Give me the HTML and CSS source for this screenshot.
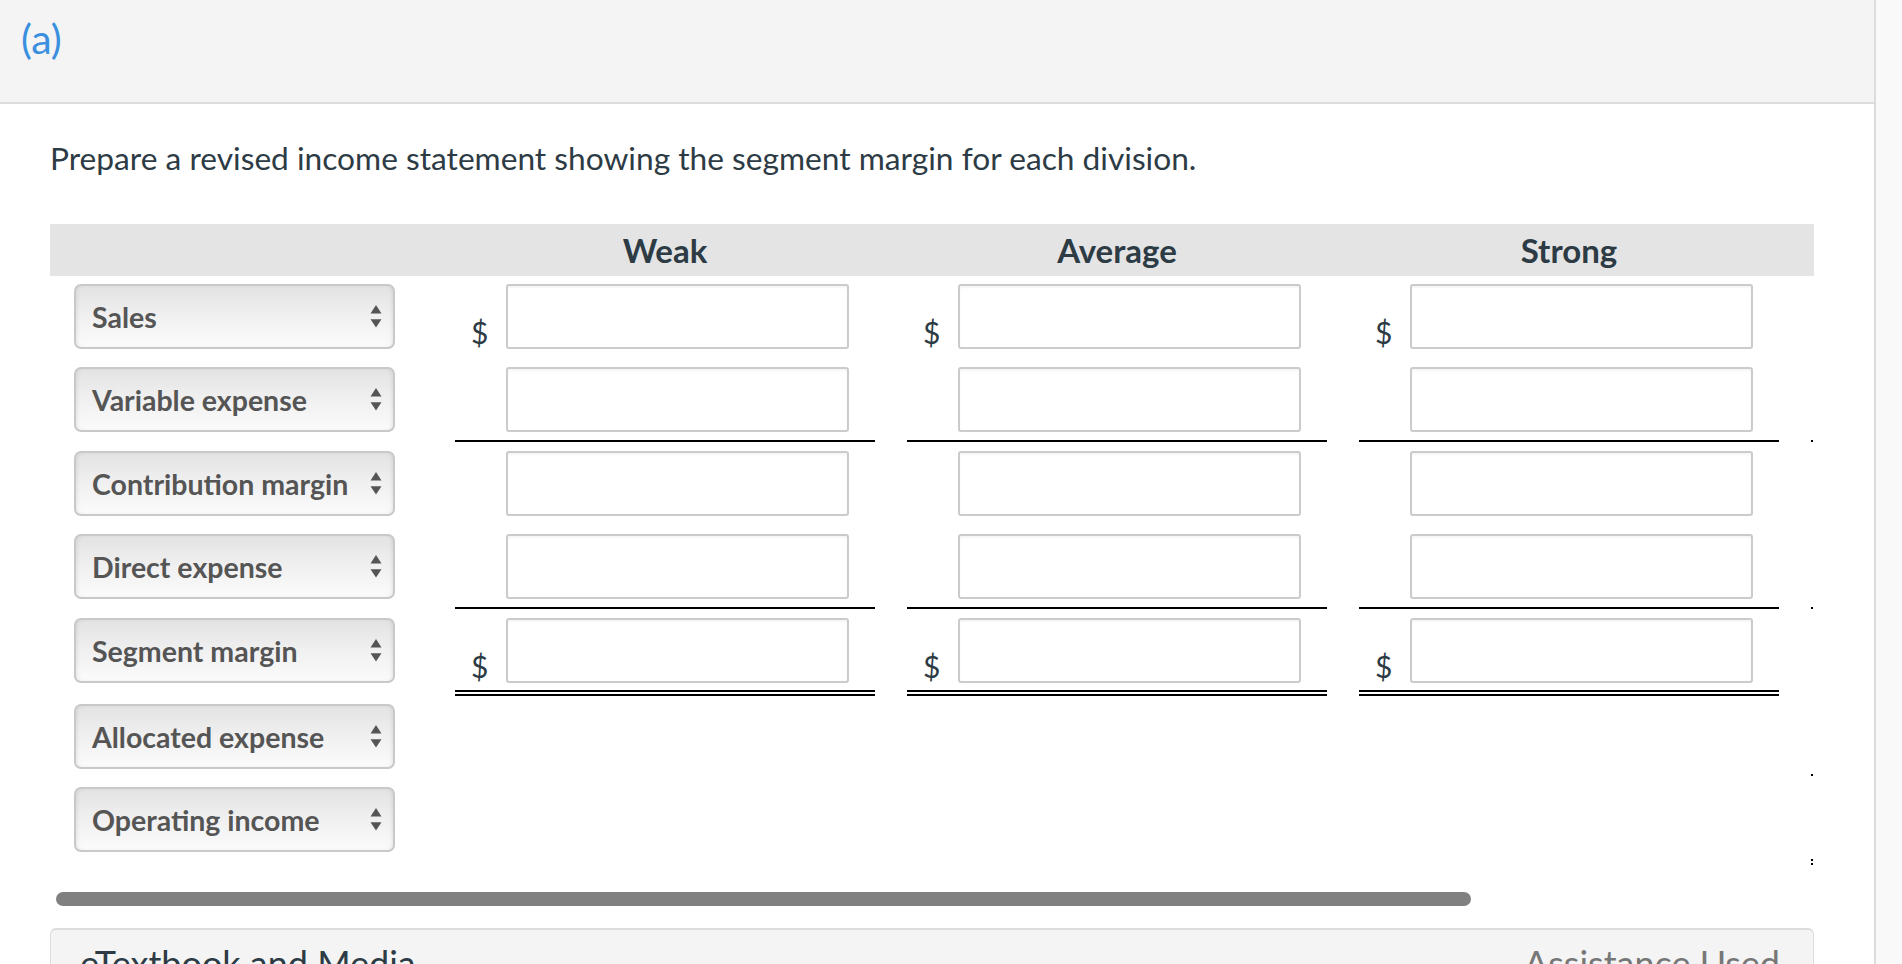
FILE: index.html
```html
<!DOCTYPE html>
<html lang="en">
<head>
<meta charset="utf-8">
<title>Segment margin</title>
<link rel="stylesheet" href="styles.css">
</head>
<body>
<div class="page">
  <div class="main">
    <header class="part-head"><span class="part-label">(a)</span></header>
    <section class="content">
      <p class="question">Prepare a revised income statement showing the segment margin for each division.</p>
      <div class="sheet">
        <div class="thead">
          <div></div>
          <div class="th">Weak</div>
          <div class="th">Average</div>
          <div class="th">Strong</div>
        </div>

        <div class="row">
          <div class="select">Sales<svg class="arrows" viewBox="0 0 12 23"><polygon points="6,0 11.5,8.6 0.5,8.6"/><polygon points="0.5,14.3 11.5,14.3 6,22.6"/></svg></div>
          <div class="amt"><span class="dollar">$</span><span class="field"></span></div>
          <div class="amt"><span class="dollar">$</span><span class="field"></span></div>
          <div class="amt"><span class="dollar">$</span><span class="field"></span></div>
          <div class="mark"></div>
        </div>

        <div class="row row-sub">
          <div class="select">Variable expense<svg class="arrows" viewBox="0 0 12 23"><polygon points="6,0 11.5,8.6 0.5,8.6"/><polygon points="0.5,14.3 11.5,14.3 6,22.6"/></svg></div>
          <div class="amt"><span class="dollar"></span><span class="field"></span></div>
          <div class="amt"><span class="dollar"></span><span class="field"></span></div>
          <div class="amt"><span class="dollar"></span><span class="field"></span></div>
          <div class="mark"><i class="dot"></i></div>
        </div>

        <div class="row">
          <div class="select">Contribution margin<svg class="arrows" viewBox="0 0 12 23"><polygon points="6,0 11.5,8.6 0.5,8.6"/><polygon points="0.5,14.3 11.5,14.3 6,22.6"/></svg></div>
          <div class="amt"><span class="dollar"></span><span class="field"></span></div>
          <div class="amt"><span class="dollar"></span><span class="field"></span></div>
          <div class="amt"><span class="dollar"></span><span class="field"></span></div>
          <div class="mark"></div>
        </div>

        <div class="row row-sub">
          <div class="select">Direct expense<svg class="arrows" viewBox="0 0 12 23"><polygon points="6,0 11.5,8.6 0.5,8.6"/><polygon points="0.5,14.3 11.5,14.3 6,22.6"/></svg></div>
          <div class="amt"><span class="dollar"></span><span class="field"></span></div>
          <div class="amt"><span class="dollar"></span><span class="field"></span></div>
          <div class="amt"><span class="dollar"></span><span class="field"></span></div>
          <div class="mark"><i class="dot"></i></div>
        </div>

        <div class="row row-total">
          <div class="select">Segment margin<svg class="arrows" viewBox="0 0 12 23"><polygon points="6,0 11.5,8.6 0.5,8.6"/><polygon points="0.5,14.3 11.5,14.3 6,22.6"/></svg></div>
          <div class="amt"><span class="dollar">$</span><span class="field"></span></div>
          <div class="amt"><span class="dollar">$</span><span class="field"></span></div>
          <div class="amt"><span class="dollar">$</span><span class="field"></span></div>
          <div class="mark"></div>
        </div>

        <div class="row">
          <div class="select">Allocated expense<svg class="arrows" viewBox="0 0 12 23"><polygon points="6,0 11.5,8.6 0.5,8.6"/><polygon points="0.5,14.3 11.5,14.3 6,22.6"/></svg></div>
          <div></div><div></div><div></div>
          <div class="mark mark-free"><i class="dot dot-r6"></i></div>
        </div>

        <div class="row">
          <div class="select">Operating income<svg class="arrows" viewBox="0 0 12 23"><polygon points="6,0 11.5,8.6 0.5,8.6"/><polygon points="0.5,14.3 11.5,14.3 6,22.6"/></svg></div>
          <div></div><div></div><div></div>
          <div class="mark mark-free"><i class="dot dot-r7"></i><i class="dot dot-pair"></i></div>
        </div>
      </div>

      <div class="hscroll"></div>

      <div class="assist">
        <span class="assist-title">eTextbook and Media</span>
        <span class="assist-used">Assistance Used</span>
      </div>
    </section>
  </div>
  <div class="vscroll"></div>
</div>
</body>
</html>
```

FILE: styles.css
```css
html, body {
  margin: 0;
  padding: 0;
}
body {
  font-family: Lato, "Open Sans", "Liberation Sans", sans-serif;
  background: #fff;
  color: #2d3b45;
  height: 964px;
  overflow: hidden;
}
.page {
  display: flex;
  height: 964px;
}
.main {
  width: 1876px;
  flex: none;
  box-sizing: border-box;
  border-right: 2px solid #dcdcdc;
  overflow: hidden;
}
.vscroll {
  flex: 1;
  background: #f9f9f9;
}
.part-head {
  height: 86px;
  padding: 16px 0 0 21px;
  background: #f4f4f4;
  border-bottom: 2px solid #dcdcdc;
}
.part-label {
  display: block;
  color: #3a8fdf;
  font-size: 41px;
  line-height: 46px;
}
.content {
  padding-left: 50px;
}
.question {
  margin: 36px 0 48px;
  font-size: 31.7px;
  line-height: 36px;
  color: #2d3b45;
}
.sheet {
  width: 1764px;
}
.thead {
  display: grid;
  grid-template-columns: 405px repeat(3, 452px);
  height: 52px;
  background: #e4e4e4;
  margin-bottom: 8px;
}
.th {
  width: 420px;
  text-align: center;
  font-weight: 700;
  font-size: 33px;
  line-height: 52px;
  color: #2d3b45;
}
.row {
  display: grid;
  grid-template-columns: 405px repeat(3, 452px) 3px;
  align-items: start;
  margin-bottom: 18px;
}
.row-sub {
  margin-bottom: 9px;
}
.row-sub .amt {
  padding-bottom: 8px;
  border-bottom: 2px solid #000;
}
.row-total {
  margin-bottom: 8px;
}
.row-total .amt {
  padding-bottom: 7px;
  border-bottom: 6px double #000;
}
.select {
  margin-left: 24px;
  width: 321px;
  height: 65px;
  box-sizing: border-box;
  border: 2px solid #c9c9c9;
  border-radius: 7px;
  background: linear-gradient(to bottom, #e3e3e3 0%, #efefef 45%, #fbfbfb 100%);
  box-shadow: inset 3px 0 5px -3px rgba(0,0,0,0.12), inset -3px 0 5px -3px rgba(0,0,0,0.12);
  display: flex;
  align-items: center;
  justify-content: space-between;
  padding: 0 11px 0 16px;
  font-size: 28.5px;
  font-weight: 700;
  color: #555;
  white-space: nowrap;
}
.arrows {
  width: 12px;
  height: 23px;
  fill: #555;
  flex: none;
}
.amt {
  width: 420px;
  display: flex;
}
.dollar {
  width: 51px;
  box-sizing: border-box;
  padding-left: 16px;
  align-self: flex-end;
  font-size: 30px;
  line-height: 30px;
  margin-bottom: 2px;
  color: #2d3b45;
}
.field {
  display: block;
  width: 343px;
  height: 65px;
  box-sizing: border-box;
  border: 2px solid #cbcbcb;
  border-radius: 3px;
  background: #fff;
  box-shadow: inset 0 2px 2px rgba(0,0,0,0.04);
}
.mark {
  align-self: end;
  height: 2px;
}
.mark-free {
  align-self: start;
  height: 0;
}
.dot {
  display: block;
  width: 2px;
  height: 2px;
  background: #000;
}
.dot-r6 {
  margin-top: 70px;
}
.dot-r7 {
  margin-top: 72px;
}
.dot-pair {
  margin-top: 2px;
}
.hscroll {
  margin: 40px 0 0 6px;
  width: 1415px;
  height: 14px;
  border-radius: 7px;
  background: #808080;
}
.assist {
  margin-top: 22px;
  width: 1764px;
  height: 90px;
  box-sizing: border-box;
  border: 1px solid #dedede;
  border-top: 2px solid #dcdcdc;
  border-radius: 6px 6px 0 0;
  background: #f4f4f4;
  display: flex;
  justify-content: space-between;
  padding: 15px 33px 0 29px;
  font-size: 36px;
  line-height: 36px;
}
.assist-title {
  color: #2d3b45;
}
.assist-used {
  color: #777;
}
```
